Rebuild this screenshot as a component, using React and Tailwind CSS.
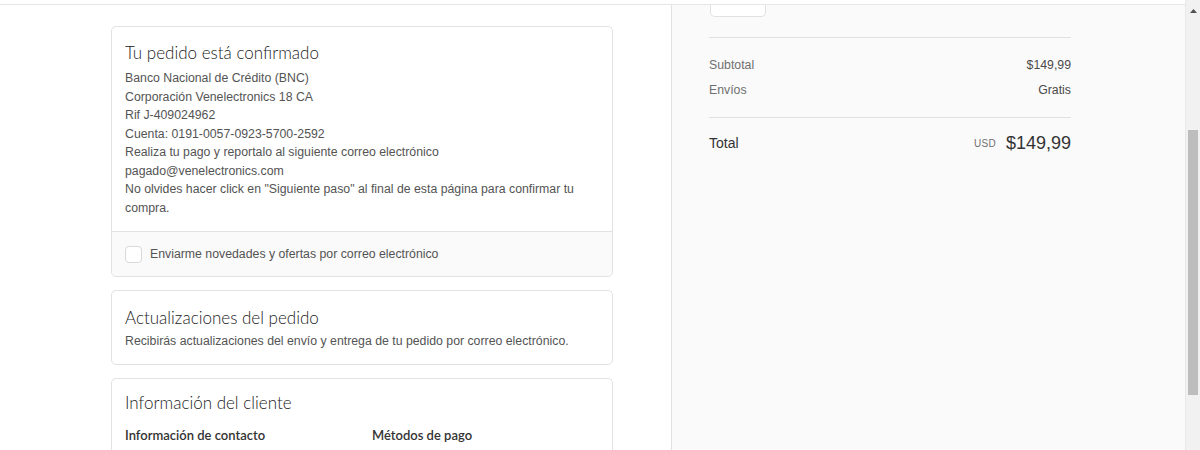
import React from 'react'

const heading = { fontFamily: 'Lato, "Open Sans", sans-serif' }

function Card({ children, className = '' }) {
  return (
    <div className={`border border-[#e2e2e2] rounded-[5px] bg-white ${className}`}>
      {children}
    </div>
  )
}

function Row({ label, value }) {
  return (
    <div className="flex justify-between text-[12.3px] leading-[25px] text-[#6f6f6f]">
      <span>{label}</span>
      <span className="text-[#4a4a4a]">{value}</span>
    </div>
  )
}

export default function App() {
  const lines = [
    'Banco Nacional de Crédito (BNC)',
    'Corporación Venelectronics 18 CA',
    'Rif J-409024962',
    'Cuenta: 0191-0057-0923-5700-2592',
    'Realiza tu pago y reportalo al siguiente correo electrónico',
    'pagado@venelectronics.com',
  ]

  return (
    <div className="h-[450px] w-[1200px] overflow-hidden flex bg-white" style={{ fontFamily: '"Liberation Sans", Arial, sans-serif' }}>
      <div className="flex-1 min-w-0 flex flex-col">
        <div className="h-[5px] border-b border-[#e6e6e6] shrink-0" />
        <div className="flex flex-1">
          <main className="w-[671px] shrink-0 pl-[111px] pr-[58px] pt-[21px] flex flex-col gap-[13px]">
            <Card>
              <div className="px-[13px] pt-[15px] pb-[14px]">
                <h2 style={heading} className="text-[17px] font-light leading-[22px] text-[#222] mb-[5px]">Tu pedido está confirmado</h2>
                <div className="text-[12.3px] leading-[18.5px] text-[#545454]">
                  {lines.map((l) => <p key={l}>{l}</p>)}
                  <p>No olvides hacer click en "Siguiente paso" al final de esta página para confirmar tu compra.</p>
                </div>
              </div>
              <label className="flex items-center gap-[8px] h-[45px] px-[13px] bg-[#fafafa] border-t border-[#e2e2e2] rounded-b-[5px]">
                <span className="w-[17px] h-[17px] rounded-[4px] border border-[#d9d9d9] bg-white shrink-0" />
                <span className="text-[12.3px] text-[#545454]">Enviarme novedades y ofertas por correo electrónico</span>
              </label>
            </Card>

            <Card className="px-[13px] pt-[16px] pb-[14px]">
              <h2 style={heading} className="text-[17px] font-light leading-[22px] text-[#222] mb-[3px]">Actualizaciones del pedido</h2>
              <p className="text-[12.3px] leading-[18px] text-[#545454]">Recibirás actualizaciones del envío y entrega de tu pedido por correo electrónico.</p>
            </Card>

            <Card className="px-[13px] pt-[13px] pb-[20px]">
              <h2 style={heading} className="text-[17px] font-light leading-[22px] text-[#222] mb-[12px]">Información del cliente</h2>
              <div className="grid grid-cols-2 gap-[20px]">
                <h3 style={heading} className="text-[13px] font-semibold text-[#333]">Información de contacto</h3>
                <h3 style={heading} className="text-[13px] font-semibold text-[#333]">Métodos de pago</h3>
              </div>
            </Card>
          </main>

          <aside className="flex-1 min-w-0 bg-[#fafafa] border-l border-[#e1e1e1] pl-[37px]">
            <div className="w-[362px]">
              <div className="ml-[1px] w-[56px] h-[12px] bg-white border border-t-0 border-[#e1e1e1] rounded-b-[5px]" />
              <div className="mt-[20px] border-t border-[#e1e1e1] pt-[15px] pb-[14px]">
                <Row label="Subtotal" value="$149,99" />
                <Row label="Envíos" value="Gratis" />
              </div>
              <div className="border-t border-[#e1e1e1] pt-[12px] flex justify-between items-center">
                <span className="text-[14px] text-[#333]">Total</span>
                <span className="flex items-center gap-[10px]">
                  <span className="text-[10px] text-[#717171] tracking-[0.3px]">USD</span>
                  <span className="text-[18px] text-[#333]">$149,99</span>
                </span>
              </div>
            </div>
          </aside>
        </div>
      </div>

      <div className="w-[15px] bg-[#f1f1f1] border-l border-[#e8e8e8] flex flex-col items-center shrink-0">
        <svg width="7" height="4" viewBox="0 0 7 4" className="mt-[9px]">
          <polygon points="3.5,0 7,4 0,4" fill="#505050" />
        </svg>
        <div className="w-[10px] h-[265px] bg-[#bdbdbd] mt-[117px]" />
      </div>
    </div>
  )
}
